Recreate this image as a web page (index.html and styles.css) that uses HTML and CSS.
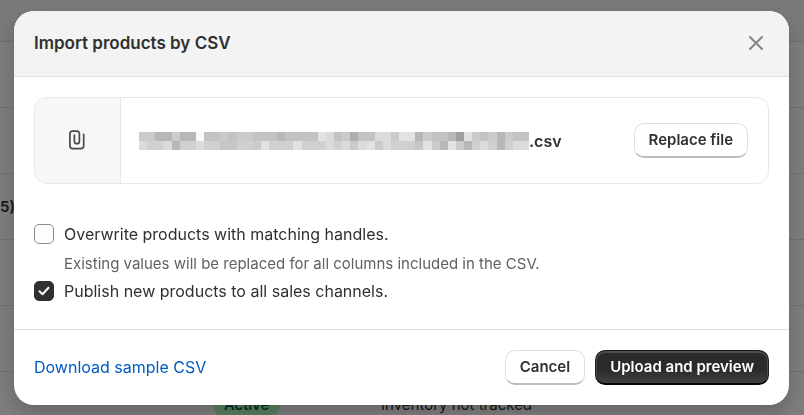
FILE: index.html
```html
<!DOCTYPE html>
<html lang="en">
<head>
<meta charset="utf-8">
<meta name="viewport" content="width=device-width, initial-scale=1">
<title>Import products by CSV</title>
<link rel="stylesheet" href="styles.css">
</head>
<body>
<div class="page" aria-hidden="true">
  <div class="row row-first"></div>
  <div class="row"></div>
  <div class="row"></div>
  <div class="row"><span class="name">5)</span></div>
  <div class="row"></div>
  <div class="row"></div>
  <div class="row"><span class="name"></span><span class="status"><span class="badge">Active</span></span><span class="stock">Inventory not tracked</span></div>
</div>
<div class="scrim">
  <section class="dialog" role="dialog" aria-modal="true" aria-labelledby="dialog-title">
    <header class="header">
      <h1 id="dialog-title">Import products by CSV</h1>
      <button class="close" type="button" aria-label="Close">
        <svg width="14" height="14" viewBox="0 0 14 14"><path d="M1 1l12 12M13 1L1 13"/></svg>
      </button>
    </header>
    <div class="body">
      <div class="file">
        <div class="file-icon">
          <svg width="16" height="20" viewBox="0 0 16 20"><path d="M5.400 5v6.200a2.500 2.500 0 0 0 5 0V3.500a2.400 2.400 0 0 0-2.400-2.400H3.300A2.400 2.400 0 0 0 .9 3.500v12.300a2.800 2.800 0 0 0 2.800 2.800h8.200a2.800 2.800 0 0 0 2.800-2.800V4.300"/></svg>
        </div>
        <div class="file-name">
          <svg class="mosaic" viewBox="0 0 48 2" preserveAspectRatio="none" aria-hidden="true">
            <path stroke="#c3c3c3" d="M0 .5h48"/>
            <path stroke="#d0d0d0" d="M0 1.500h48"/>
            <path stroke="#cbcbcb" d="M0 .5h2M4 .5h1M10 .5h1M12 .5h2M25 .5h1M31 .5h1M35 .5h1M41 .5h1M43 .5h1M45 .5h1M14 1.500h1M26 1.500h1M29 1.500h1M36 1.500h1M39 1.500h1"/>
            <path stroke="#c6c6c6" d="M10 1.500h2M34 1.500h1"/>
            <path stroke="#b7b7b7" d="M2 .5h2M5 .5h2M17 .5h1M34 .5h1M38 .5h1M44 .5h1M4 1.500h1M37 1.500h1M40 1.500h1M44 1.500h1"/>
            <path stroke="#aeaeae" d="M26 .5h1"/>
            <path stroke="#a0a0a0" d="M39 .5h1"/>
            <path stroke="#dbdbdb" d="M23 .5h1M29 .5h2M0 1.500h1M3 1.500h1M7 1.500h1M23 1.500h1M25 1.500h1M27 1.500h1M30 1.500h1M42 1.500h1M46 1.500h2"/>
            <path stroke="#e2e2e2" d="M22 .5h1M32 .5h2M40 .5h1M15 1.500h1M19 1.500h1M28 1.500h1M35 1.500h1M38 1.500h1"/>
            <path stroke="#fafafa" d="M7 .5h1"/>
          </svg>
          <span>.csv</span>
        </div>
        <button class="button" type="button">Replace file</button>
      </div>
      <div class="choices">
        <div class="choice">
          <input type="checkbox" id="overwrite" aria-describedby="overwrite-help">
          <label for="overwrite">Overwrite products with matching handles.</label>
        </div>
        <p class="help" id="overwrite-help">Existing values will be replaced for all columns included in the CSV.</p>
        <div class="choice">
          <span class="tick-box">
            <input type="checkbox" id="publish" checked>
            <svg width="12" height="10" viewBox="0 0 12 10"><path d="M1.500 5.200l3 3 6-6.400"/></svg>
          </span>
          <label for="publish">Publish new products to all sales channels.</label>
        </div>
      </div>
    </div>
    <footer class="footer">
      <a href="#">Download sample CSV</a>
      <div class="actions">
        <button class="button" type="button">Cancel</button>
        <button class="button primary" type="button">Upload and preview</button>
      </div>
    </footer>
  </section>
</div>
</body>
</html>
```
FILE: styles.css
```css
* { box-sizing: border-box; }

body {
  margin: 0;
  height: 100vh;
  overflow: hidden;
  background: #fff;
  color: #303030;
  font: 16px/24px Inter, "Liberation Sans", sans-serif;
}

.page { height: 100vh; overflow: hidden; }

.row {
  display: flex;
  align-items: center;
  height: 66px;
  border-top: 1px solid #e3e3e3;
  font-size: 15px;
}
.row-first { height: 41px; border-top: 0; background: #f7f7f7; }
.name { width: 213px; font-weight: 600; }
.status { width: 168px; }
.badge {
  display: inline-block;
  padding: 0 11px;
  border-radius: 12px;
  background: #affebf;
  color: #014b40;
  font-weight: 500;
}

.scrim {
  position: fixed;
  inset: 0;
  padding: 11px 15px 10px 14px;
  background: rgba(0, 0, 0, 0.51);
}

.dialog {
  overflow: hidden;
  border-radius: 20px;
  background: #fff;
  box-shadow: 0 8px 20px rgba(0, 0, 0, 0.2);
}

.header {
  display: flex;
  align-items: center;
  justify-content: space-between;
  padding: 19px 20px 21px;
  height: 66px;
  border-bottom: 1px solid #e1e1e1;
  background: #f3f3f3;
}
h1 { margin: 0; font-size: 17px; line-height: 24px; font-weight: 600; }
.close {
  display: flex;
  padding: 6px;
  border: 0;
  background: none;
}
svg { display: block; fill: none; stroke-linecap: round; stroke-linejoin: round; }
.close svg { stroke: #858585; stroke-width: 2; }

.body { padding: 20px; }

.file {
  display: flex;
  align-items: center;
  height: 87px;
  padding-right: 20px;
  overflow: hidden;
  border: 1px solid #e8e8e8;
  border-radius: 12px;
}
.file-icon {
  display: flex;
  align-items: center;
  justify-content: center;
  align-self: stretch;
  width: 86px;
  padding: 0 2px 2px 0;
  border-right: 1px solid #e8e8e8;
  background: #f7f7f7;
}
.file-icon svg { stroke: #4a4a4a; stroke-width: 1.7; }
.file-name {
  display: flex;
  flex: 1;
  align-items: center;
  padding-left: 18px;
  line-height: 18px;
  font-weight: 600;
}
.mosaic { width: 390px; height: 18px; stroke-linecap: butt; shape-rendering: crispEdges; }

.button {
  height: 35px;
  padding: 0 14px;
  border: 1px solid #e0e0e0;
  border-bottom: 2px solid #bdbdbd;
  border-radius: 10px;
  background: #fff;
  color: #303030;
  font: 600 15px/20px Inter, "Liberation Sans", sans-serif;
}
.primary {
  border-color: #1a1a1a;
  border-bottom-color: #050505;
  background: linear-gradient(#2b2b2b 60%, #414141);
  box-shadow: inset 0 1px 0 1px #4c4c4c;
  color: #fff;
}

.choices { padding: 38px 0 6px; }
.choice { display: flex; align-items: center; gap: 10px; height: 24px; }
input {
  appearance: none;
  display: block;
  width: 20px;
  height: 20px;
  margin: 0;
  border: 1px solid #8a8a8a;
  border-radius: 5px;
  background: #fdfdfd;
}
input:checked { border-color: #303030; background: #303030; }
.tick-box { display: grid; place-items: center; }
.tick-box > * { grid-area: 1 / 1; }
.tick-box svg { z-index: 1; stroke: #fff; stroke-width: 2; pointer-events: none; }
.help { margin: 8px 0 5px; padding-left: 30px; color: #616161; font-size: 15px; line-height: 20px; }

.footer {
  display: flex;
  align-items: center;
  justify-content: space-between;
  padding: 20px;
  border-top: 1px solid #e1e1e1;
}
a { padding-bottom: 2px; color: #005bc4; text-decoration: none; }
.actions { display: flex; gap: 10px; }
```
